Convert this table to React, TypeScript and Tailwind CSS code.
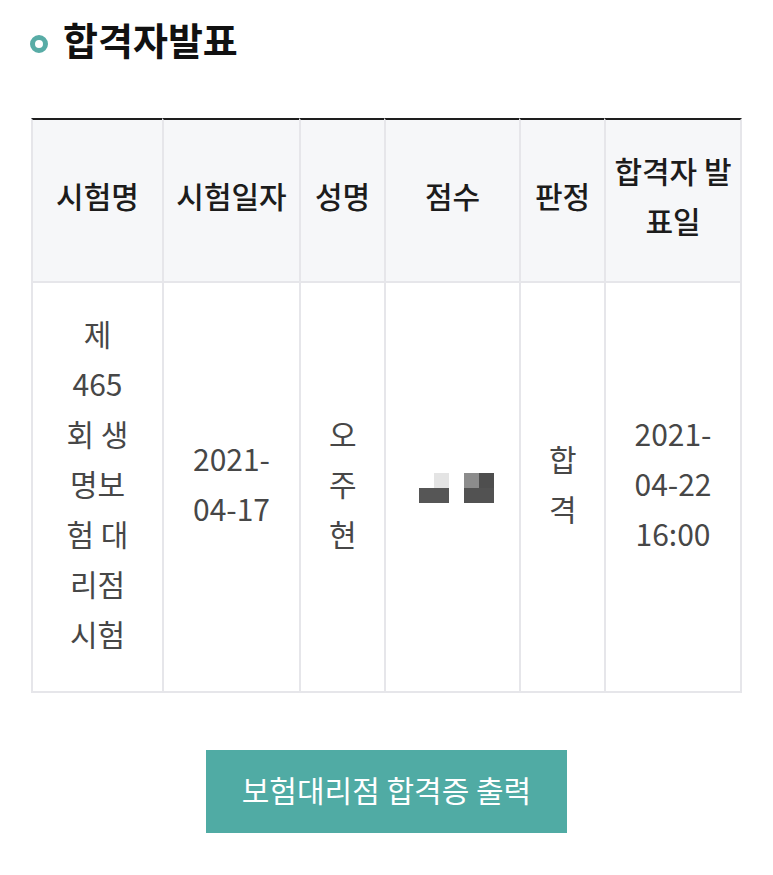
import React from 'react';

const FONT = { fontFamily: '"Noto Sans CJK KR", "Noto Sans", sans-serif' };

function ScoreMask() {
  // 점수 is shown pixelated in the screenshot
  return (
    <svg width="75" height="30" viewBox="0 0 75 30" className="mx-auto block">
      <rect x="15" y="0" width="15" height="15" fill="#e4e4e4" />
      <rect x="0" y="15" width="30" height="15" fill="#565656" />
      <rect x="45" y="0" width="15" height="15" fill="#8c8c8c" />
      <rect x="60" y="0" width="15" height="15" fill="#4e4e4e" />
      <rect x="45" y="15" width="30" height="15" fill="#525252" />
    </svg>
  );
}

const headers = ['시험명', '시험일자', '성명', '점수', '판정', '합격자 발표일'];
const widths = ['w-[131px]', 'w-[137px]', 'w-[85px]', 'w-[135px]', 'w-[85px]', 'w-[138px]'];

export default function App() {
  return (
    <div className="min-h-[875px] w-[773px] bg-white" style={FONT}>
      <div className="flex items-center gap-[15px] pl-[30px] pt-[14px]">
        <span className="block h-[18px] w-[18px] translate-y-[5px] rounded-full border-[5px] border-[#58aca6]" />
        <h2 className="text-[38px] font-bold leading-[50px] text-[#111]">합격자발표</h2>
      </div>

      <div className="mt-[54px] px-[31px]">
        <table className="w-[711px] table-fixed border-separate border-spacing-0 text-center">
          <colgroup>
            {widths.map((w, i) => (
              <col key={i} className={w} />
            ))}
          </colgroup>
          <thead>
            <tr>
              {headers.map((h, i) => (
                <th
                  key={h}
                  className={`h-[165px] border-l-2 border-t-2 border-b-2 border-l-[#e6e6ea] border-t-[#1e1e1e] border-b-[#e6e6ea] bg-[#f6f7f9] px-[4px] pb-[12px] align-middle text-[30px] font-medium leading-[50px] text-[#1c1c1c] ${
                    i === headers.length - 1 ? 'border-r-2 border-r-[#e6e6ea]' : ''
                  }`}
                >
                  {h}
                </th>
              ))}
            </tr>
          </thead>
          <tbody className="text-[30px] leading-[50px] text-[#474747]">
            <tr>
              <td className="h-[410px] break-all border-b-2 border-l-2 border-[#e6e6ea] px-[27px] pb-[8px] align-middle">
                제 <span className="inline-block">465</span>회 생명보험 대리점 시험
              </td>
              <td className="border-b-2 border-l-2 border-[#e6e6ea] px-[20px] pb-[8px] align-middle">2021-04-17</td>
              <td className="break-all border-b-2 border-l-2 border-[#e6e6ea] px-[28px] pb-[8px] align-middle">오주현</td>
              <td className="border-b-2 border-l-2 border-[#e6e6ea] pl-[7px] pt-[1px] align-middle">
                <ScoreMask />
              </td>
              <td className="break-all border-b-2 border-l-2 border-[#e6e6ea] px-[28px] pb-[8px] align-middle">합격</td>
              <td className="border-b-2 border-l-2 border-r-2 border-[#e6e6ea] px-[10px] pb-[8px] align-middle">
                2021-04-22 16:00
              </td>
            </tr>
          </tbody>
        </table>
      </div>

      <div className="mt-[57px] flex justify-center">
        <button
          type="button"
          className="h-[83px] w-[361px] bg-[#50aba4] pb-[6px] text-[30px] leading-none text-white"
        >
          보험대리점 합격증 출력
        </button>
      </div>
    </div>
  );
}
